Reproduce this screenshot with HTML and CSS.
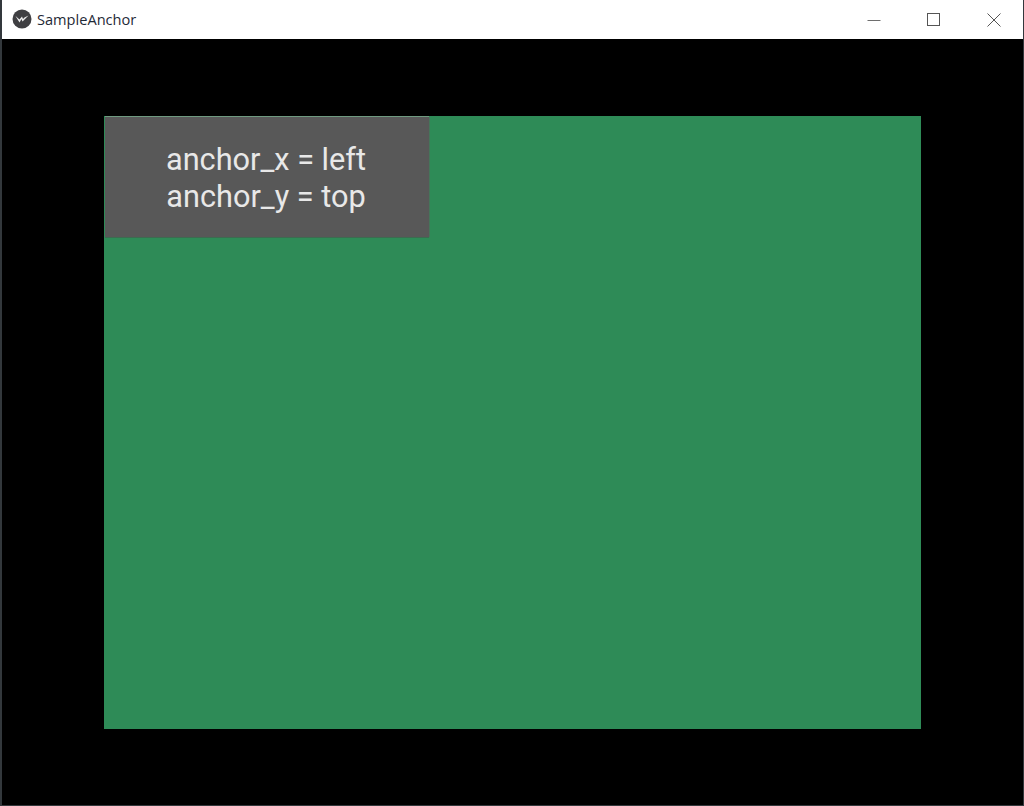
FILE: index.html
```html
<!DOCTYPE html>
<html lang="en">
<head>
    <meta charset="UTF-8">
    <title>SampleAnchor</title>
    <link rel="stylesheet" href="styles.css">
</head>
<body>
    <div class="window">
        <div class="titlebar">
            <svg class="app-icon" width="20" height="20" viewBox="0 0 20 20">
                <circle cx="10" cy="10" r="9.5" fill="#3f3f42"/>
                <path d="M3.5 7 L7.5 13.5 L9.5 10 L10.5 12.5 L16.5 6.5 L12.5 8.5 L11 10 L10 7.5 L7.5 10.5 Z" fill="#eeeeee"/>
            </svg>
            <span class="title">SampleAnchor</span>
            <div class="controls">
                <button class="control">
                    <svg width="14" height="14" viewBox="0 0 14 14"><path d="M0.5 7.5 H13.5" stroke="#6e6e6e" fill="none"/></svg>
                </button>
                <button class="control">
                    <svg width="14" height="14" viewBox="0 0 14 14"><rect x="0.5" y="0.5" width="12" height="12" stroke="#555" fill="none"/></svg>
                </button>
                <button class="control">
                    <svg width="14" height="14" viewBox="0 0 14 14"><path d="M0.5 0.5 L13.5 13.5 M13.5 0.5 L0.5 13.5" stroke="#555" fill="none"/></svg>
                </button>
            </div>
        </div>
        <div class="content">
            <div class="anchor-layout">
                <div class="anchor-button">anchor_x = left<br>anchor_y = top</div>
            </div>
        </div>
    </div>
</body>
</html>
```

FILE: styles.css
```css
html, body {
    margin: 0;
    height: 100%;
    overflow: hidden;
}
.window {
    height: 806px;
    box-sizing: border-box;
    display: flex;
    flex-direction: column;
    border-left: 2px solid #33383c;
    border-right: 1px solid #33383c;
    border-bottom: 1px solid #33383c;
    background: #000;
}
.titlebar {
    height: 39px;
    flex: none;
    display: flex;
    align-items: center;
    background: #fff;
    padding-left: 10px;
}
.app-icon {
    flex: none;
    margin-top: -2px;
}
.title {
    margin-left: 5px;
    margin-top: -1px;
    font-family: "Open Sans", "Noto Sans", sans-serif;
    font-size: 14.6px;
    color: #1f2a37;
}
.controls {
    margin-left: auto;
    display: flex;
    align-self: stretch;
}
.control {
    width: 60px;
    padding: 0 0 0 2px;
    border: none;
    background: none;
    display: flex;
    align-items: center;
    justify-content: center;
}
.content {
    flex: 1;
    padding: 77px 102px 0;
}
.anchor-layout {
    height: 613px;
    background: #2e8b57;
    padding: 1px;
    box-sizing: border-box;
}
.anchor-button {
    width: 324px;
    height: 120px;
    box-sizing: border-box;
    padding: 2px 2px 0 0;
    display: flex;
    align-items: center;
    justify-content: center;
    text-align: center;
    background: #585858;
    box-shadow: 0 -1px 0 #6f9a80, 0 1px 0 #3c6b50, 1px 0 0 #46745a;
    color: #e8e8e8;
    font-family: Roboto, sans-serif;
    font-size: 30.7px;
    line-height: 37px;
}
```
